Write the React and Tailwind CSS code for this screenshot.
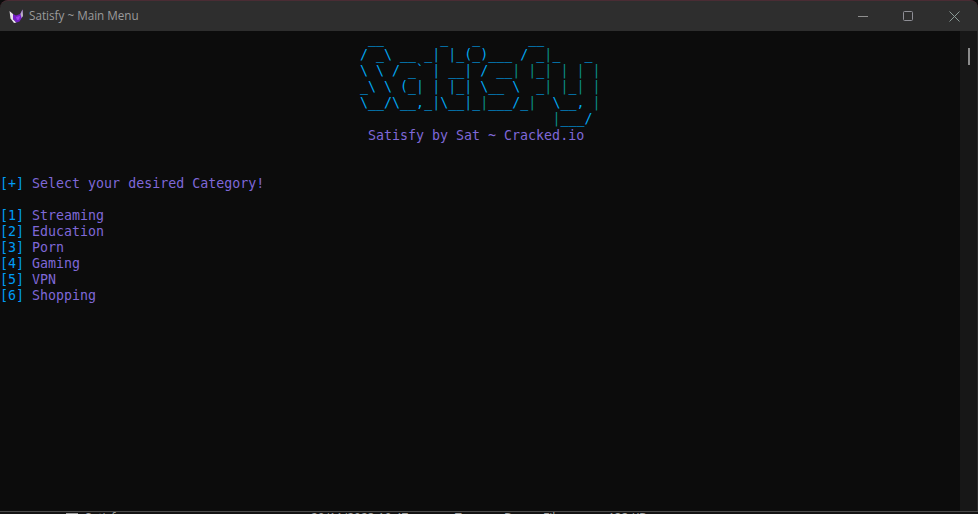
import React from 'react';

const art = [
  ' __       _   _      __',
  '/ _\\ __ _| |_(_)___ / _|_   _',
  '\\ \\ / _` | __| / __| |_| | | |',
  '_\\ \\ (_| | |_| \\__ \\  _| |_| |',
  '\\__/\\__,_|\\__|_|___/_|  \\__, |',
  '                        |___/',
];

const categories = ['Streaming', 'Education', 'Porn', 'Gaming', 'VPN', 'Shopping'];

function ArtLine({ text }) {
  return (
    <div className="h-4 whitespace-pre">
      {text.split('').map((c, i) => {
        if (c !== '|') return <span key={i}>{c}</span>;
        return <span key={i} className={i < 15 ? 'text-[#0a9ad2]' : 'text-[#0a8f86]'}>{c}</span>;
      })}
    </div>
  );
}

function MenuLine({ tag, label }) {
  return (
    <div className="h-4 whitespace-pre">
      <span className="text-[#009cf5]">[{tag}]</span>
      <span className="text-[#7f68d8]"> {label}</span>
    </div>
  );
}

export default function App() {
  return (
    <div className="w-[978px] h-[514px] overflow-hidden bg-[#0c0c0c] flex flex-col">
      <div className="h-[31px] shrink-0 flex items-center bg-[#2e2e2e] border-t border-[#4a2c34] rounded-tr-lg rounded-tl-lg">
        <svg className="ml-[9px] w-[15px] h-[15px]" viewBox="0 0 15 15">
          <path d="M0.5 2 L4 5 L4 10 L7.5 13.5 L5 14 L1.5 9.5 Z" fill="#e6e2ea" />
          <path d="M13.5 0.5 L14 7 L10.5 12.5 L7.5 13.5 L4 10 L4 5 L7 6.5 L11 5 Z" fill="#7420c4" />
          <path d="M7 8 L11 7 L10 10.5 L8 11 Z" fill="#a43cf0" />
          <path d="M13.5 0.5 L14 7 L12.5 9 L11.5 5 Z" fill="#b8b4c0" />
        </svg>
        <span className="ml-[5px] text-[11.7px] text-[#9b9b9b] font-['Open_Sans',sans-serif]">Satisfy ~ Main Menu</span>
        <div className="ml-auto flex h-full items-center">
          <div className="w-[46px] flex justify-center">
            <svg width="10" height="10" viewBox="0 0 10 10"><path d="M0 5.5 H10" stroke="#8f8f8f" strokeWidth="1" /></svg>
          </div>
          <div className="w-[45px] flex justify-center pr-[2px]">
            <div className="w-[10px] h-[10px] border border-[#8f8f96] rounded-[1.5px]" />
          </div>
          <div className="w-[47px] flex justify-center">
            <svg width="11" height="11" viewBox="0 0 11 11"><path d="M0.5 0.5 L10.5 10.5 M10.5 0.5 L0.5 10.5" stroke="#8a9a96" strokeWidth="1" /></svg>
          </div>
        </div>
      </div>

      <div className="h-[480px] shrink-0 flex">
        <div className="flex-1 font-['DejaVu_Sans_Mono',monospace] text-[13.3px] leading-4">
          <div className="pl-[360px] text-[#00a8f2]">
            {art.map((line, i) => <ArtLine key={i} text={line} />)}
          </div>
          <div className="h-4 mt-px pl-[368px] whitespace-pre text-[#7f68d8]">Satisfy by Sat ~ Cracked.io</div>
          <div className="mt-8">
            <MenuLine tag="+" label="Select your desired Category!" />
          </div>
          <div className="mt-4">
            {categories.map((c, i) => <MenuLine key={c} tag={i + 1} label={c} />)}
          </div>
        </div>
        <div className="w-[18px] shrink-0 bg-[#171717] border-r border-[#2b2b2b] pt-[17px] pl-[8px]">
          <div className="w-[2px] h-[17px] bg-[#8c8c8c]" />
        </div>
      </div>

      <div className="h-[3px] shrink-0 overflow-hidden border-t border-[#4a4a4a] bg-[#141414]">
        <div className="flex text-[12px] leading-[11px] text-[#a0a0a0] font-['Open_Sans',sans-serif] whitespace-pre">
          <span className="ml-[66px] mt-px w-[12px] h-[4px] bg-[#9a9a9a]" />
          <span className="ml-[7px] w-[226px]">Satisfy.exe</span>
          <span className="w-[144px]">20/11/2023 10:47</span>
          <span className="w-[49px]">Type</span>
          <span className="w-[39px]">Dyn</span>
          <span className="w-[65px]">File</span>
          <span>133 KB</span>
        </div>
      </div>
    </div>
  );
}
